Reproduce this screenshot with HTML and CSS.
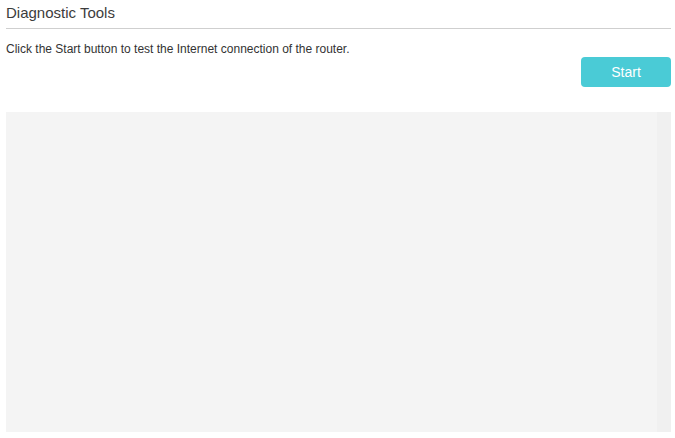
FILE: index.html
```html
<!DOCTYPE html>
<html>
<head>
<meta charset="utf-8">
<link rel="stylesheet" href="styles.css">
</head>
<body>
<div class="page">
  <h1 class="title">Diagnostic Tools</h1>
  <p class="desc">Click the Start button to test the Internet connection of the router.</p>
  <div class="actions">
    <button class="start-btn" type="button">Start</button>
  </div>
  <div class="output">
    <div class="output-body"></div>
    <div class="output-bar"></div>
  </div>
</div>
</body>
</html>
```

FILE: styles.css
```css
html, body {
  margin: 0;
  padding: 0;
  background: #fff;
}
body {
  font-family: "Liberation Sans", Arial, sans-serif;
  color: #333;
}
.page {
  padding: 0 4px 0 6px;
}
.title {
  margin: 0;
  padding: 3px 0 5px;
  font-size: 15px;
  font-weight: normal;
  line-height: 20px;
  color: #3c3c3c;
  border-bottom: 1px solid #cfcfcf;
}
.desc {
  margin: 13px 0 0;
  font-size: 12px;
  line-height: 15px;
  color: #333;
}
.actions {
  display: flex;
  justify-content: flex-end;
}
.start-btn {
  width: 90px;
  height: 30px;
  border: none;
  border-radius: 4px;
  background: #4acbd6;
  color: #fff;
  font-family: "Liberation Sans", Arial, sans-serif;
  font-size: 14px;
  padding: 0;
}
.output {
  margin-top: 25px;
  height: 320px;
  display: flex;
}
.output-body {
  flex: 1;
  background: #f4f4f4;
}
.output-bar {
  width: 14px;
  background: #f0f0f0;
}
```
